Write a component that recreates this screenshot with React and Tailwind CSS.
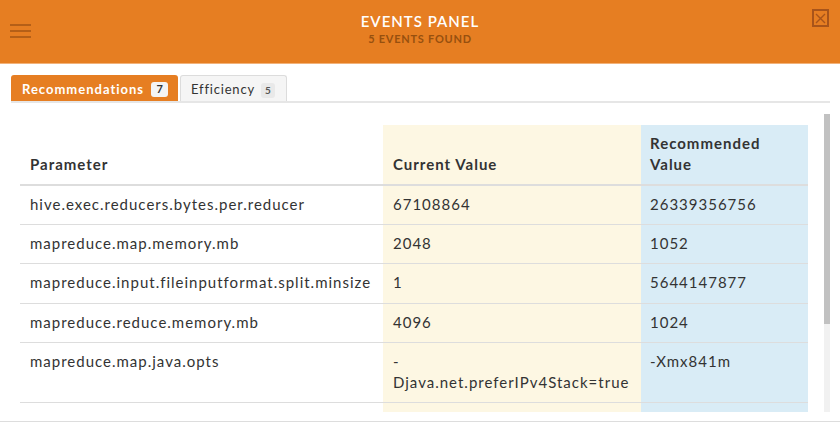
import React from "react";

const rows = [
  ["hive.exec.reducers.bytes.per.reducer", "67108864", "26339356756"],
  ["mapreduce.map.memory.mb", "2048", "1052"],
  ["mapreduce.input.fileinputformat.split.minsize", "1", "5644147877"],
  ["mapreduce.reduce.memory.mb", "4096", "1024"],
  [
    "mapreduce.map.java.opts",
    <>
      -
      <br />
      <span className="whitespace-nowrap">Djava.net.preferIPv4Stack=true</span>
    </>,
    "-Xmx841m",
  ],
  ["\u00a0", "\u00a0", "\u00a0"],
];

export default function App() {
  return (
    <div className="w-[840px] h-[422px] bg-white overflow-hidden font-['Lato',sans-serif] text-[#333] flex flex-col">
      {/* Header */}
      <div className="h-[64px] shrink-0 bg-[#e67e22] border-b border-[#f2b27a] flex items-start justify-between">
        <div className="w-[42px] pl-[10px] pt-[24px] flex flex-col gap-[4px]">
          <div className="h-[2px] w-[21px] bg-[#b55f17]" />
          <div className="h-[2px] w-[21px] bg-[#b55f17]" />
          <div className="h-[2px] w-[21px] bg-[#b55f17]" />
        </div>
        <div className="flex flex-col items-center pt-[12px]">
          <div className="text-[15px] leading-[18px] font-semibold tracking-[1px] text-white">
            EVENTS PANEL
          </div>
          <div className="mt-[2px] text-[11px] leading-[13px] font-bold tracking-[0.75px] text-[#97500f]">
            5 EVENTS FOUND
          </div>
        </div>
        <div className="w-[42px] flex justify-end pr-[11px] pt-[9px]">
          <div className="w-[17px] h-[18px] border-2 border-[#a8541a] flex items-center justify-center">
            <svg width="11" height="11" viewBox="0 0 11 11">
              <path d="M1 1 L10 10 M10 1 L1 10" stroke="#a8541a" strokeWidth="1.4" fill="none" />
            </svg>
          </div>
        </div>
      </div>

      {/* Tabs */}
      <div className="mt-[11px] ml-[11px] mr-[10px] flex items-end gap-[2px] border-b-2 border-[#e6e6e6]">
        <div className="h-[26px] bg-[#e67e22] rounded-t-[3px] pl-[11px] pr-[10px] pt-[3px] flex items-center gap-[7px]">
          <span className="text-[13px] font-bold tracking-[1px] text-white">Recommendations</span>
          <span className="w-[17px] h-[15px] rounded-[3px] bg-[#f4f4f4] text-[#333] text-[11px] font-bold flex items-center justify-center">
            7
          </span>
        </div>
        <div className="h-[26px] bg-[#f5f5f5] border border-b-0 border-[#dcdcdc] rounded-t-[3px] pl-[10px] pr-[11px] pt-[3px] flex items-center gap-[6px]">
          <span className="text-[13px] tracking-[0.8px] text-[#333]">Efficiency</span>
          <span className="w-[14px] h-[15px] rounded-[3px] bg-[#e9e9e9] text-[#555] text-[10px] font-bold flex items-center justify-center">
            5
          </span>
        </div>
      </div>

      {/* Scroll area */}
      <div className="mt-[11px] ml-[11px] mr-[10px] h-[298px] flex">
        <div className="flex-1 overflow-hidden pl-[9px] pt-[11px]">
          <div className="w-[788px] text-[15px] tracking-[1px]">
            <div className="grid grid-cols-[363px_258px_167px] items-end border-b-2 border-[#dddddd] font-bold">
              <div className="pl-[10px] pr-[10px] pt-[8px] pb-[9px] leading-[21px]">Parameter</div>
              <div className="self-stretch flex items-end bg-[#fdf7e3] pl-[10px] pr-[10px] pt-[8px] pb-[9px] leading-[21px]">
                Current Value
              </div>
              <div className="bg-[#d9ecf6] pl-[9px] pr-[10px] pt-[8px] pb-[9px] leading-[21px]">
                Recommended
                <br />
                Value
              </div>
            </div>
            {rows.map((r, i) => (
              <div
                key={i}
                className={
                  "grid grid-cols-[363px_258px_167px] " +
                  (i > 0 ? "border-t border-[#dddddd]" : "")
                }
              >
                <div className="pl-[10px] pr-[10px] pt-[8px] pb-[9.2px] leading-[21px]">{r[0]}</div>
                <div className="bg-[#fdf7e3] pl-[10px] pr-[4px] pt-[8px] pb-[9.2px] leading-[21px]">{r[1]}</div>
                <div className="bg-[#d9ecf6] pl-[9px] pr-[8px] pt-[8px] pb-[9.2px] leading-[21px]">{r[2]}</div>
              </div>
            ))}
          </div>
        </div>
        <div className="w-[6px] ml-[16px] flex flex-col bg-[#f1f1f1]">
          <div className="h-[210px] bg-[#c1c1c1]" />
        </div>
      </div>

      <div className="flex-1" />
      <div className="h-px bg-[#dddddd]" />
    </div>
  );
}
